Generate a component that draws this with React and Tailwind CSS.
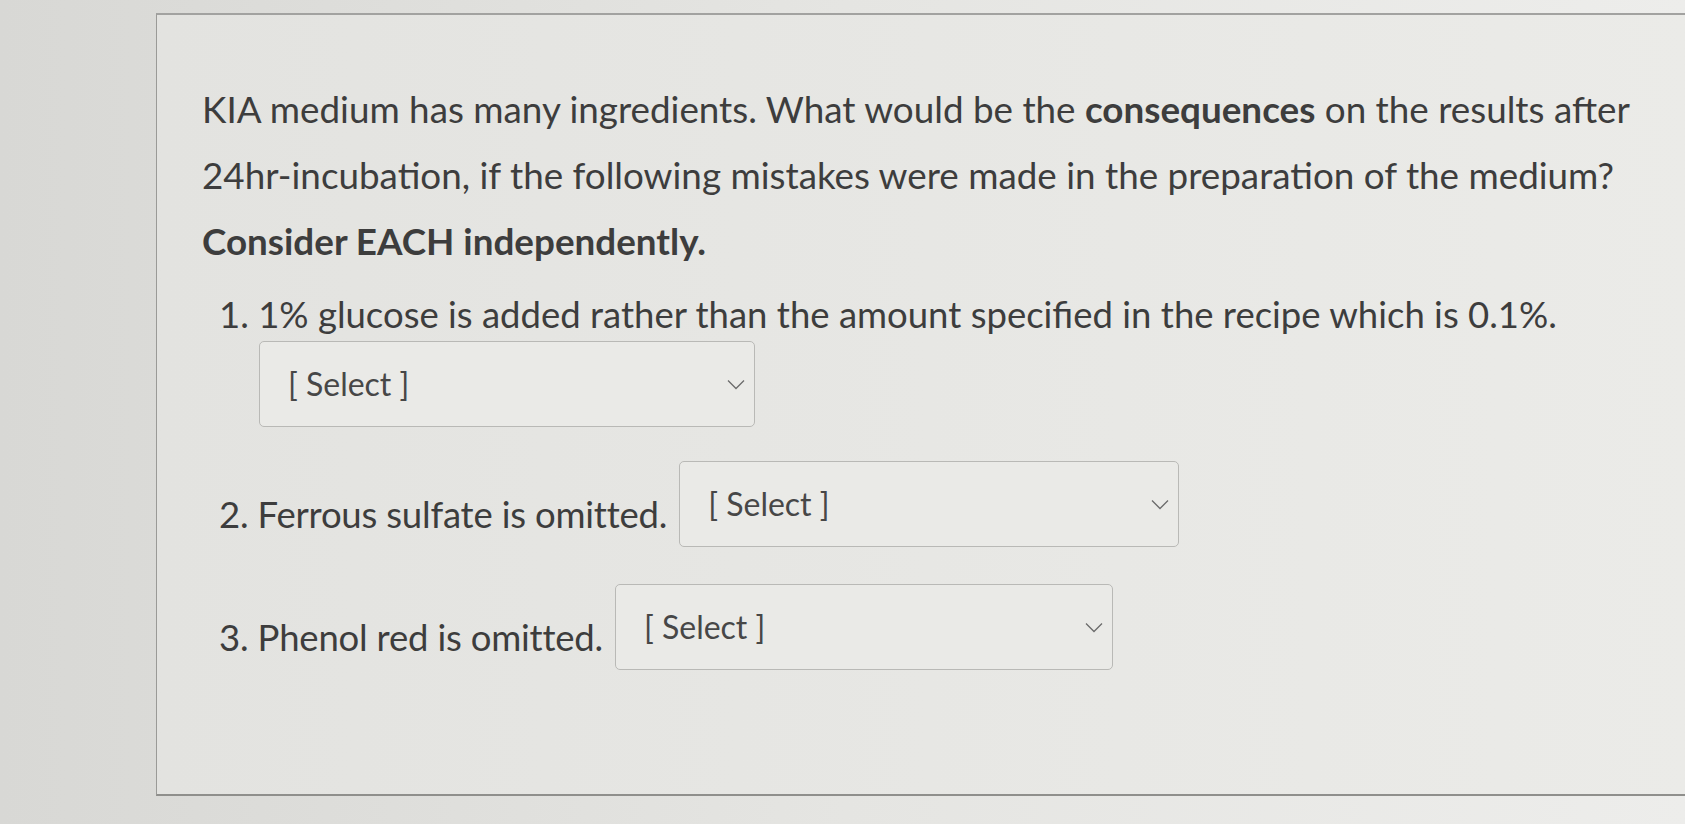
const font = { fontFamily: 'Lato, "Noto Sans", sans-serif' };

function Chevron() {
  return (
    <svg width="18" height="11" viewBox="0 0 18 11" fill="none" className="shrink-0">
      <path d="M1 1.5 L9 9.5 L17 1.5" stroke="#6b6b6b" strokeWidth="1.3" />
    </svg>
  );
}

function SelectBox({ className }) {
  return (
    <div
      className={`flex h-[86px] items-center justify-between rounded-[5px] border border-[#b9b9b6] bg-[#eaeae7] pl-7 pr-[9px] ${className}`}
    >
      <span className="text-[32px] text-[#474747]">[ Select ]</span>
      <Chevron />
    </div>
  );
}

export default function App() {
  return (
    <div
      className="flex h-[824px] w-full overflow-hidden bg-gradient-to-r from-[#d8d8d5] via-[#e5e5e2] to-[#ededeb] text-[#3d3d3d]"
      style={font}
    >
      <div className="w-[156px] shrink-0" />
      <div className="flex flex-1 flex-col pt-[13px]">
        <div className="flex h-[783px] flex-col border-l border-t-2 border-b-2 border-l-[#9a9a97] border-t-[#a2a2a0] border-b-[#8f8f8c] bg-gradient-to-r from-[#e3e3e0] to-[#ebebe8] pl-[45px] pt-[61px]">
          <p className="text-[36.8px] leading-[66px]">
            KIA medium has many ingredients. What would be the <b className="font-bold">consequences</b> on the results after
            <br />
            24hr-incubation, if the following mistakes were made in the preparation of the medium?
            <br />
            <b className="font-bold">Consider EACH independently.</b>
          </p>

          <div className="mt-[7px] flex flex-col pl-[17px] text-[36.5px] leading-[66px]">
            <div>1. 1% glucose is added rather than the amount specified in the recipe which is 0.1%.</div>
            <SelectBox className="ml-[40px] mt-[-6px] w-[496px]" />

            <div className="mt-[34px] flex items-center gap-[12px]">
              <span className="translate-y-[10px] tracking-[-0.2px]">2. Ferrous sulfate is omitted.</span>
              <SelectBox className="w-[500px]" />
            </div>

            <div className="mt-[37px] flex items-center gap-[12px]">
              <span className="translate-y-[10px] tracking-[-0.2px]">3. Phenol red is omitted.</span>
              <SelectBox className="w-[498px]" />
            </div>
          </div>
        </div>
      </div>
    </div>
  );
}
